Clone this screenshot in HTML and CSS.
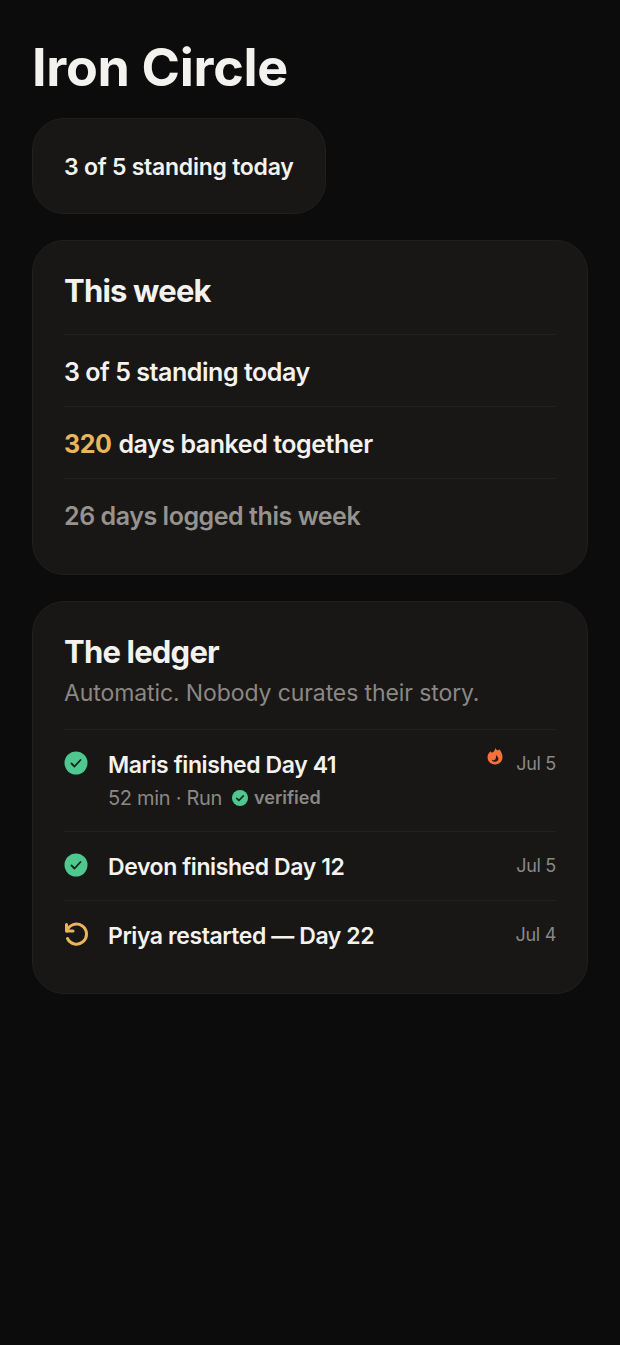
FILE: index.html
```html
<!DOCTYPE html>
<html lang="en">
<head>
    <meta charset="UTF-8">
    <meta name="viewport" content="width=device-width, initial-scale=1.0">
    <title>Iron Circle</title>
    <link rel="stylesheet" href="styles.css">
</head>
<body>
    <div class="container">
        <h1 class="title">Iron Circle</h1>

        <div class="pill">3 of 5 standing today</div>

        <section class="card">
            <h2 class="card-title">This week</h2>
            <div class="stat">3 of 5 standing today</div>
            <div class="stat"><span class="gold">320</span> days banked together</div>
            <div class="stat stat-muted">26 days logged this week</div>
        </section>

        <section class="card card-ledger">
            <h2 class="card-title">The ledger</h2>
            <p class="card-sub">Automatic. Nobody curates their story.</p>

            <div class="entry">
                <svg class="entry-icon" viewBox="0 0 24 24">
                    <circle cx="12" cy="12" r="11.5" fill="#4fc88f"/>
                    <path d="M7.5 12.500l3 3 6-6.500" fill="none" stroke="#14261e" stroke-width="1.800" stroke-linecap="round" stroke-linejoin="round"/>
                </svg>
                <div class="entry-body">
                    <div class="entry-name">Maris finished Day 41</div>
                    <div class="entry-meta">
                        52 min · Run
                        <span class="verified">
                            <svg class="verified-icon" viewBox="0 0 24 24">
                                <circle cx="12" cy="12" r="12" fill="#4fc88f"/>
                                <path d="M7 12.500l3.300 3.300 6.700-7" fill="none" stroke="#14261e" stroke-width="2.400" stroke-linecap="round" stroke-linejoin="round"/>
                            </svg>
                            verified
                        </span>
                    </div>
                </div>
                <svg class="flame" viewBox="0 0 16 18">
                    <path d="M8.500 0.500c.2 1.800 1.200 2.900 2.300 2.800.6 0 1-.4 1.300-1C14 4 15.500 7 15.500 10.200c0 4.300-3.300 7.300-7.500 7.300S.5 14.500.5 10.200C.5 7.500 2 5.500 3.800 4.200c.2 1 .7 1.500 1.400 1.400C6.800 5.300 8.200 3 8.500.5z" fill="#f5703c"/>
                    <path d="M8.800 7.500c.3 1 1 1.300 1.600 1.900.8.800 1.100 1.700 1 2.600-.2 1.700-1.700 2.800-3.400 2.800-1.500 0-2.800-.8-3.300-2.100 1.200.7 2.700.6 3.500-.3 1-1.200 1-3.200.6-4.900z" fill="#2a1510"/>
                </svg>
                <span class="entry-date">Jul 5</span>
            </div>

            <div class="entry">
                <svg class="entry-icon" viewBox="0 0 24 24">
                    <circle cx="12" cy="12" r="11.5" fill="#4fc88f"/>
                    <path d="M7.500 12.500l3 3 6-6.500" fill="none" stroke="#14261e" stroke-width="1.800" stroke-linecap="round" stroke-linejoin="round"/>
                </svg>
                <div class="entry-body">
                    <div class="entry-name">Devon finished Day 12</div>
                </div>
                <span class="entry-date">Jul 5</span>
            </div>

            <div class="entry">
                <svg class="entry-icon" viewBox="0 0 24 24" fill="none" stroke="#e8b45c" stroke-width="3" stroke-linecap="round" stroke-linejoin="round">
                    <path d="M2.500 2.500v6.500h6.500"/>
                    <path d="M3 9A10 10 0 1 1 3.500 16.500"/>
                </svg>
                <div class="entry-body">
                    <div class="entry-name">Priya restarted — Day 22</div>
                </div>
                <span class="entry-date">Jul 4</span>
            </div>
        </section>
    </div>
</body>
</html>
```

FILE: styles.css
```css
* {
    margin: 0;
    padding: 0;
    box-sizing: border-box;
}

body {
    font-family: 'Inter', sans-serif;
    background: #0d0c0c;
    color: #f4f2ee;
    min-height: 100vh;
}

.container {
    display: flex;
    flex-direction: column;
    align-items: flex-start;
    padding: 32px 32px 0;
}

.title {
    font-size: 52px;
    line-height: 72px;
    font-weight: 700;
    letter-spacing: -0.3px;
    margin-bottom: 14px;
}

.pill {
    background: #181716;
    border: 1px solid #201f1e;
    border-radius: 32px;
    padding: 32px 31px 30px;
    font-size: 23px;
    line-height: 32px;
    font-weight: 600;
    letter-spacing: -0.25px;
    margin-bottom: 26px;
}

.card {
    width: 100%;
    background: #181716;
    border: 1px solid #201f1e;
    border-radius: 32px;
    padding: 28px 31px 24px;
    margin-bottom: 26px;
}

.card-title {
    font-size: 31px;
    line-height: 44px;
    font-weight: 700;
    letter-spacing: -0.8px;
    padding-bottom: 21px;
}

.stat {
    border-top: 1px solid #222120;
    height: 72px;
    padding-top: 2px;
    display: flex;
    align-items: center;
    gap: 7px;
    font-size: 25px;
    font-weight: 600;
    letter-spacing: -0.45px;
}

.gold {
    color: #e8b45c;
    font-weight: 700;
}

.stat-muted {
    color: #96938e;
}

.card-ledger .card-title {
    padding-bottom: 0;
}

.card-sub {
    font-size: 23px;
    line-height: 38px;
    letter-spacing: -0.1px;
    color: #8b8884;
    padding-bottom: 17px;
}

.entry {
    border-top: 1px solid #222120;
    display: flex;
    align-items: flex-start;
    padding: 20px 0 18px;
}

.entry-icon {
    width: 24px;
    height: 24px;
    flex-shrink: 0;
    margin-top: 1px;
    margin-right: 20px;
}

.entry-body {
    flex: 1;
}

.entry-name {
    font-size: 23px;
    line-height: 30px;
    font-weight: 600;
    letter-spacing: -0.42px;
}

.entry-meta {
    display: flex;
    align-items: center;
    gap: 10px;
    font-size: 20px;
    line-height: 30px;
    letter-spacing: -0.3px;
    color: #8b8884;
    margin-top: 3px;
}

.verified {
    display: flex;
    align-items: center;
    gap: 6px;
    font-size: 18px;
    font-weight: 600;
    letter-spacing: 0;
}

.verified-icon {
    width: 16px;
    height: 16px;
}

.flame {
    width: 16px;
    height: 18px;
    margin-top: -3px;
    margin-right: 13px;
}

.entry-date {
    font-size: 18px;
    line-height: 24px;
    letter-spacing: -0.3px;
    color: #8b8884;
    margin-top: 2px;
}
```
